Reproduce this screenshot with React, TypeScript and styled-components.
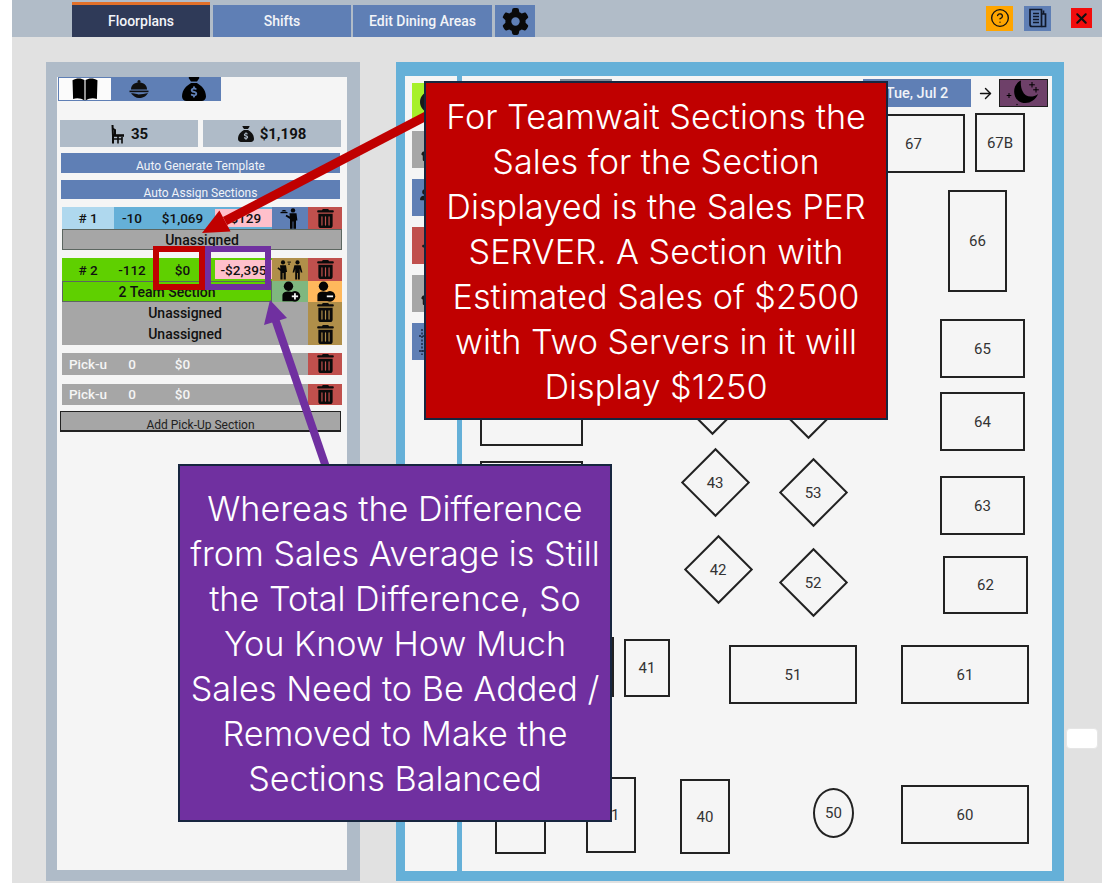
import React from "react";
import styled, { createGlobalStyle } from "styled-components";
import { FaChair, FaGear, FaSackDollar, FaTrashCan, FaXmark, FaClock, FaUsers, FaPlus } from "react-icons/fa6";
import { CircleHelp, ArrowRight } from "lucide-react";

const UI_FONT = `Roboto, "Open Sans", sans-serif`;

const GlobalStyle = createGlobalStyle`
  html, body {
    margin: 0;
    padding: 0;
    background: #ffffff;
    font-family: ${UI_FONT};
  }
  * { box-sizing: border-box; }
`;

const Page = styled.div`
  position: relative;
  width: 1114px;
  height: 883px;
  padding: 0 12px;
  overflow: hidden;
`;

const AppWindow = styled.div`
  width: 1090px;
  height: 883px;
  background: #e1e1e1;
`;

const TopBar = styled.header`
  height: 37px;
  display: flex;
  align-items: flex-end;
  padding-left: 60px;
  background: #b1bcc8;
`;

const Tab = styled.div<{ $active?: boolean; $w?: number; $gap?: number }>`
  width: ${({ $w }) => $w ?? 138}px;
  height: ${({ $active }) => ($active ? 35 : 32)}px;
  margin-right: ${({ $gap }) => $gap ?? 2}px;
  display: flex;
  align-items: center;
  justify-content: center;
  background: ${({ $active }) => ($active ? "#2f3a58" : "#5f7fb5")};
  border-top: ${({ $active }) => ($active ? "3px solid #e2702a" : "none")};
  color: #f2f4f8;
  font-size: 14px;
  font-weight: 500;
`;

const TopActions = styled.div`
  margin-left: auto;
  height: 37px;
  display: flex;
  align-items: center;
  padding-right: 10px;
`;

const TopAction = styled.div<{ $bg: string; $size: number; $gap: number }>`
  width: ${({ $size }) => $size}px;
  height: ${({ $size }) => ($size > 24 ? 25 : 20)}px;
  margin-left: ${({ $gap }) => $gap}px;
  margin-bottom: 1px;
  display: flex;
  align-items: center;
  justify-content: center;
  background: ${({ $bg }) => $bg};
  color: #111;
`;

const Main = styled.main`
  display: flex;
  padding: 25px 0 0 34px;
  gap: 36px;
`;

const LeftPanel = styled.section`
  width: 314px;
  height: 819px;
  border: solid #afbbc8;
  border-width: 15px 13px 11px 11px;
  background: #f5f5f5;
`;

const MiniTabs = styled.div`
  width: 163px;
  height: 24px;
  margin-left: 1px;
  display: flex;
  background: #5f7fb5;
`;

const MiniTab = styled.div<{ $active?: boolean }>`
  width: ${({ $active }) => ($active ? 54 : 55)}px;
  display: flex;
  align-items: center;
  justify-content: center;
  background: ${({ $active }) => ($active ? "#fbfbfb" : "transparent")};
  border: ${({ $active }) => ($active ? "1px solid #5f7fb5" : "none")};
  color: #000;
`;

const Stats = styled.div`
  display: flex;
  gap: 5px;
  margin: 19px 0 0 3px;
`;

const Stat = styled.div`
  width: 138px;
  height: 27px;
  display: flex;
  align-items: center;
  justify-content: center;
  gap: 6px;
  background: #afbbc8;
  color: #111;
  font-size: 15px;
  font-weight: 700;
`;

const WideButton = styled.div<{ $top: number }>`
  width: 279px;
  height: 19.5px;
  margin: ${({ $top }) => $top}px 0 0 4px;
  overflow: hidden;
  background: #5f7fb5;
  color: #f0f3f8;
  font-size: 12px;
  line-height: 26px;
  text-align: center;
`;

const RowGroup = styled.div<{ $top: number }>`
  width: 280px;
  margin: ${({ $top }) => $top}px 0 0 5px;
`;

const SectionRow = styled.div<{ $h?: number }>`
  display: grid;
  grid-template-columns: 52px 36px 65px 57px 36px 34px;
  height: ${({ $h }) => $h ?? 22}px;
  font-size: 13.5px;
  font-weight: 500;
`;

const Cell = styled.div<{ $bg?: string; $span?: number; $color?: string; $name?: boolean }>`
  grid-column: span ${({ $span }) => $span ?? 1};
  display: flex;
  align-items: center;
  justify-content: center;
  white-space: nowrap;
  overflow: hidden;
  background: ${({ $bg }) => $bg ?? "transparent"};
  color: ${({ $color }) => $color ?? "#111"};
  font-size: ${({ $name }) => ($name ? "14px" : "inherit")};
`;

const PinkValue = styled.div<{ $edge: string }>`
  grid-column: span 1;
  display: flex;
  align-items: center;
  justify-content: center;
  background: #ffc0cb;
  border: solid ${({ $edge }) => $edge};
  border-width: 2px 0 2px 0;
  color: #111;
  font-size: 13.5px;
  font-weight: 500;
  overflow: hidden;
`;

const NameBar = styled.div<{ $bg: string; $h: number }>`
  height: ${({ $h }) => $h}px;
  display: flex;
  align-items: center;
  justify-content: center;
  background: ${({ $bg }) => $bg};
  border: 1px solid #5c6660;
  color: #111;
  font-size: 14px;
  font-weight: 500;
`;

const TeamName = styled(NameBar)`
  grid-column: span 4;
`;

const AddPickup = styled.div`
  width: 281px;
  height: 21px;
  margin: 6px 0 0 3px;
  overflow: hidden;
  background: #a6a6a6;
  border: 1px solid #222;
  border-bottom-width: 2px;
  color: #222;
  font-size: 12px;
  line-height: 26px;
  text-align: center;
`;

const RightPanel = styled.section`
  width: 668px;
  height: 819px;
  display: flex;
  border: solid #65b0d8;
  border-width: 14px 12px 10px 9px;
  background: #f5f5f5;
`;

const Rail = styled.div`
  width: 52px;
  padding: 7px 0 0 7px;
  display: flex;
  flex-direction: column;
  gap: 11px;
`;

const RailButton = styled.div<{ $bg: string }>`
  width: 38px;
  height: 37px;
  display: flex;
  align-items: center;
  justify-content: center;
  background: ${({ $bg }) => $bg};
  color: #1a1a1a;
  font-size: 22px;
`;

const RailDivider = styled.div`
  width: 5px;
  background: #65b0d8;
`;

const Floor = styled.div`
  position: relative;
  flex: 1;
`;

const FloorHeader = styled.div`
  display: flex;
  align-items: center;
  height: 28px;
  margin-top: 3px;
  padding: 0 4px 0 98px;
`;

const ModeTab = styled.div`
  width: 52px;
  height: 28px;
  background: #7f8a96;
`;

const DateButton = styled.div`
  width: 108px;
  height: 28px;
  margin-left: auto;
  display: flex;
  align-items: center;
  justify-content: center;
  background: #5f7fb5;
  color: #f0f3f8;
  font-size: 14.5px;
  font-weight: 500;
`;

const NextArrow = styled.div`
  width: 28px;
  display: flex;
  justify-content: center;
  color: #111;
`;

const MoonBox = styled.div`
  width: 49px;
  height: 28px;
  display: flex;
  align-items: center;
  justify-content: center;
  background: #6e4069;
  border: 1px solid #1d1d1d;
`;

// tables are items on a free canvas, x/y come from the floorplan data
const Table = styled.div<{ $x: number; $y: number; $w: number; $h: number; $round?: boolean }>`
  position: absolute;
  left: ${({ $x }) => $x}px;
  top: ${({ $y }) => $y}px;
  width: ${({ $w }) => $w}px;
  height: ${({ $h }) => $h}px;
  display: flex;
  align-items: center;
  justify-content: center;
  border: 2px solid #222;
  border-radius: ${({ $round }) => ($round ? "50%" : "0")};
  color: #333;
  font-size: 15px;
`;

const DiamondTable = styled(Table)`
  transform: rotate(45deg);
`;

const DiamondLabel = styled.span`
  transform: rotate(-45deg);
`;

const Handle = styled.div`
  position: absolute;
  left: 1066px;
  top: 728px;
  width: 32px;
  height: 21px;
  background: #ffffff;
  border: 1px solid #e6e6e6;
  border-radius: 4px;
`;

const Markup = styled.svg`
  position: absolute;
  left: 0;
  top: 0;
  width: 1114px;
  height: 883px;
  pointer-events: none;
`;

const Callout = styled.div<{ $x: number; $y: number; $w: number; $h: number; $bg: string }>`
  position: absolute;
  left: ${({ $x }) => $x}px;
  top: ${({ $y }) => $y}px;
  width: ${({ $w }) => $w}px;
  height: ${({ $h }) => $h}px;
  padding-top: 1px;
  display: flex;
  flex-direction: column;
  align-items: center;
  justify-content: center;
  background: ${({ $bg }) => $bg};
  border: 2px solid #17263f;
  color: #ffffff;
  font-family: Inter, "Noto Sans", sans-serif;
  font-size: 34.2px;
  font-weight: 300;
  line-height: 45px;
`;

const CalloutLine = styled.div`
  white-space: nowrap;
`;

const Trash = ({ size = 19 }: { size?: number }) => <FaTrashCan size={size} color="#0b0b0b" />;

const BookIcon = () => (
  <svg width="28" height="24" viewBox="0 0 28 25" fill="#000">
    <path d="M1 3.5C5 .8 10 .8 13.4 3.2V24.5C10 22 5 21.6 1.6 23Z" />
    <path d="M27 3.5C23 .8 18 .8 14.6 3.2V24.5C18 22 23 21.6 26.4 23Z" />
  </svg>
);

const ServiceIcon = () => (
  <svg width="22" height="22" viewBox="0 0 22 22" fill="#101010">
    <circle cx="11" cy="3.4" r="1.5" />
    <path d="M3 11.5C3 7.2 6.5 4.6 11 4.6S19 7.2 19 11.5Z" />
    <rect x="1.5" y="12.6" width="19" height="1.6" />
    <path d="M3 15.4C6 14.8 8 16 10.5 16.4L15 16C17 15.8 18.5 15.2 20 15C18.5 18 15 20 11 20C8 20 5.5 18 3 15.4Z" />
  </svg>
);

const ChairIcon = () => (
  <svg width="15" height="20" viewBox="0 0 15 20" fill="none" stroke="#0a0a0a" strokeWidth="2">
    <path d="M2.5 1L3 12V19.5" />
    <path d="M2.5 4.5L5 6V11" />
    <path d="M2 11.5H14" strokeWidth="2.6" />
    <path d="M8 12V16M4 15H12M12 13V19.5M8 16V19.5" strokeWidth="1.6" />
  </svg>
);

const WaiterIcon = () => (
  <svg width="22" height="21" viewBox="0 0 22 21" fill="#050505">
    <circle cx="14" cy="2.4" r="2.2" />
    <path d="M10.5 5.2H17.5L18.4 12.5H17V20.8H14.4V13.6H13.6V20.8H11V11L6.6 8.2L7.4 6.8L10.8 8.4Z" />
    <rect x="1.5" y="4" width="7" height="1.2" />
    <path d="M2.6 3.6C2.6 1.6 7.4 1.6 7.4 3.6Z" />
  </svg>
);

const TeamIcon = () => (
  <svg width="30" height="20" viewBox="0 0 30 20" fill="#080808">
    <circle cx="8" cy="2.4" r="2.1" />
    <path d="M5 5.2H11L12 12H10.8V19.6H8.6V13H7.6V19.6H5.4V11L2.4 8.4L3.4 7.2L5.4 8.8Z" />
    <circle cx="22.5" cy="2.4" r="2.1" />
    <path d="M19.4 5.2H25.6L27.4 12.4H25.8L24.8 9V19.6H22.9V13H22.1V19.6H20.2V9L19.2 12.4H17.6Z" />
    <rect x="12.5" y="1.6" width="3.4" height="1" />
    <rect x="13" y="3.6" width="2" height="1" />
  </svg>
);

const PersonBadge = ({ minus }: { minus?: boolean }) => (
  <svg width="21" height="21" viewBox="0 0 26 26">
    <circle cx="10.5" cy="6.5" r="5.8" fill="#050505" />
    <path d="M3 25V18C3 14.5 6 13 10.5 13C14 13 16 14 17 15.5V25Z" fill="#050505" />
    <circle cx="18.5" cy="19" r="6.6" fill="#050505" />
    <rect x="14.6" y="17.9" width="7.8" height="2.2" fill="#f5f5f5" />
    {!minus && <rect x="17.4" y="15.1" width="2.2" height="7.8" fill="#f5f5f5" />}
  </svg>
);

const NoteIcon = () => (
  <svg width="22" height="22" viewBox="0 0 22 22" fill="none" stroke="#10182a" strokeWidth="1.7">
    <path d="M3 2.5H14.5V19.5H5C3.8 19.5 3 18.7 3 17.5Z" />
    <path d="M6 6.5H12M6 9.5H12M6 12.5H12M6 15.5H12" />
    <path d="M14.5 7H18.5V19.5H14.5" />
    <path d="M16.5 7V3.5" />
  </svg>
);

const MoonIcon = () => (
  <svg width="47" height="26" viewBox="0 0 47 26" fill="#000">
    <path d="M21 .5C13 4 12 15 18 20.5C25 26 35 22 38 14C32 18.5 25 17 22.5 11C21 7.5 20.5 4 21 .5Z" />
    <path d="M32 2V7.5M29.2 4.8H34.8M36 7V12.5M33.2 9.8H38.8M9 13V18M6.7 15.5H11.3" stroke="#000" strokeWidth="1" />
    <circle cx="17" cy="24.5" r=".7" />
  </svg>
);

const GridIcon = () => (
  <svg width="26" height="30" viewBox="0 0 26 30" fill="none" stroke="#18243c" strokeWidth="1.4" strokeDasharray="2 1.5">
    <path d="M4 2V28M22 2V28M1 9H25M1 24H25" />
  </svg>
);

const PLAIN_TABLES = [
  { id: "67", x: 400, y: 38, w: 103, h: 59 },
  { id: "67B", x: 513, y: 37, w: 50, h: 59 },
  { id: "66", x: 486, y: 114, w: 59, h: 102 },
  { id: "65", x: 478, y: 243, w: 85, h: 59 },
  { id: "64", x: 478, y: 316, w: 85, h: 59 },
  { id: "63", x: 478, y: 400, w: 85, h: 59 },
  { id: "62", x: 481, y: 480, w: 85, h: 58 },
  { id: "61", x: 439, y: 569, w: 128, h: 59 },
  { id: "60", x: 439, y: 709, w: 128, h: 59 },
  { id: "51", x: 267, y: 569, w: 128, h: 59 },
  { id: "41", x: 162, y: 563, w: 46, h: 58 },
  { id: "40", x: 218, y: 703, w: 50, h: 75 },
  { id: "31", x: 124, y: 701, w: 50, h: 76 },
  { id: "30", x: 33, y: 703, w: 51, h: 75 },
  { id: "", x: 103, y: 561, w: 49, h: 60 },
  { id: "", x: 18, y: 270, w: 103, h: 100 },
  { id: "", x: 18, y: 385, w: 103, h: 60 },
];

const DIAMOND_TABLES = [
  { id: "44", x: 226, y: 300 },
  { id: "54", x: 322, y: 304 },
  { id: "43", x: 229, y: 382 },
  { id: "53", x: 327, y: 392 },
  { id: "42", x: 232, y: 469 },
  { id: "52", x: 327, y: 482 },
];

const RED_TEXT = [
  "For Teamwait Sections the",
  "Sales for the Section",
  "Displayed is the Sales PER",
  "SERVER. A Section with",
  "Estimated Sales of $2500",
  "with Two Servers in it will",
  "Display $1250",
];

const PURPLE_TEXT = [
  "Whereas the Difference",
  "from Sales Average is Still",
  "the Total Difference, So",
  "You Know How Much",
  "Sales Need to Be Added /",
  "Removed to Make the",
  "Sections Balanced",
];

const PickupRow = () => (
  <SectionRow $h={21.5}>
    <Cell $bg="#a6a6a6" $color="#f5f5f5">Pick-u</Cell>
    <Cell $bg="#a6a6a6" $color="#f5f5f5">0</Cell>
    <Cell $bg="#a6a6a6" $color="#f5f5f5">$0</Cell>
    <Cell $bg="#a6a6a6" $span={2} />
    <Cell $bg="#c0504d"><Trash /></Cell>
  </SectionRow>
);

export default function App() {
  return (
    <Page>
      <GlobalStyle />
      <AppWindow>
        <TopBar>
          <Tab $active $gap={3}>Floorplans</Tab>
          <Tab>Shifts</Tab>
          <Tab $w={139} $gap={3}>Edit Dining Areas</Tab>
          <Tab $w={40}><FaGear size={27} color="#0a0a0a" /></Tab>
          <TopActions>
            <TopAction $bg="#ffa500" $size={27} $gap={0}><CircleHelp size={20} strokeWidth={1.6} /></TopAction>
            <TopAction $bg="#5f7fb5" $size={27} $gap={11}><NoteIcon /></TopAction>
            <TopAction $bg="#f20d0d" $size={21} $gap={20}><FaXmark size={17} /></TopAction>
          </TopActions>
        </TopBar>

        <Main>
          <LeftPanel>
            <MiniTabs>
              <MiniTab $active><BookIcon /></MiniTab>
              <MiniTab><ServiceIcon /></MiniTab>
              <MiniTab><FaSackDollar size={24} /></MiniTab>
            </MiniTabs>

            <Stats>
              <Stat><ChairIcon /> 35</Stat>
              <Stat><FaSackDollar size={16} /> $1,198</Stat>
            </Stats>

            <WideButton $top={6}>Auto Generate Template</WideButton>
            <WideButton $top={7}>Auto Assign Sections</WideButton>

            <RowGroup $top={8}>
              <SectionRow>
                <Cell $bg="#afd8ee"># 1</Cell>
                <Cell $bg="#65b0d8">-10</Cell>
                <Cell $bg="#65b0d8">$1,069</Cell>
                <PinkValue $edge="#65b0d8">-$129</PinkValue>
                <Cell $bg="#5f7fb5"><WaiterIcon /></Cell>
                <Cell $bg="#c0504d"><Trash /></Cell>
              </SectionRow>
              <NameBar $bg="#a6a6a6" $h={21}>Unassigned</NameBar>
            </RowGroup>

            <RowGroup $top={8}>
              <SectionRow $h={23}>
                <Cell $bg="#5fd000"># 2</Cell>
                <Cell $bg="#5fd000">-112</Cell>
                <Cell $bg="#5fd000">$0</Cell>
                <PinkValue $edge="#5fd000">-$2,395</PinkValue>
                <Cell $bg="#b08f4a"><TeamIcon /></Cell>
                <Cell $bg="#c0504d"><Trash /></Cell>
              </SectionRow>
              <SectionRow $h={21}>
                <TeamName $bg="#5fd000" $h={21}>2 Team Section</TeamName>
                <Cell $bg="#7fb77f"><PersonBadge /></Cell>
                <Cell $bg="#ffb85c"><PersonBadge minus /></Cell>
              </SectionRow>
              <SectionRow $h={21.5}>
                <Cell $bg="#a6a6a6" $span={5} $name>Unassigned</Cell>
                <Cell $bg="#b08f4a"><Trash /></Cell>
              </SectionRow>
              <SectionRow $h={21.5}>
                <Cell $bg="#a6a6a6" $span={5} $name>Unassigned</Cell>
                <Cell $bg="#b08f4a"><Trash /></Cell>
              </SectionRow>
            </RowGroup>

            <RowGroup $top={8}><PickupRow /></RowGroup>
            <RowGroup $top={9}><PickupRow /></RowGroup>

            <AddPickup>Add Pick-Up Section</AddPickup>
          </LeftPanel>

          <RightPanel>
            <Rail>
              <RailButton $bg="#a6f02a"><FaClock /></RailButton>
              <RailButton $bg="#a6a6a6"><FaChair /></RailButton>
              <RailButton $bg="#5f7fb5"><FaUsers /></RailButton>
              <RailButton $bg="#c0504d"><FaPlus /></RailButton>
              <RailButton $bg="#a6a6a6"><FaChair /></RailButton>
              <RailButton $bg="#5f7fb5"><GridIcon /></RailButton>
            </Rail>
            <RailDivider />
            <Floor>
              <FloorHeader>
                <ModeTab />
                <DateButton>Tue, Jul 2</DateButton>
                <NextArrow><ArrowRight size={17} strokeWidth={2} /></NextArrow>
                <MoonBox><MoonIcon /></MoonBox>
              </FloorHeader>
              {PLAIN_TABLES.map((t, i) => (
                <Table key={i} $x={t.x} $y={t.y} $w={t.w} $h={t.h}>{t.id}</Table>
              ))}
              {DIAMOND_TABLES.map((t) => (
                <DiamondTable key={t.id} $x={t.x} $y={t.y} $w={49} $h={49}>
                  <DiamondLabel>{t.id}</DiamondLabel>
                </DiamondTable>
              ))}
              <Table $x={351} $y={712} $w={41} $h={50} $round>50</Table>
            </Floor>
          </RightPanel>
        </Main>
      </AppWindow>

      <Handle />

      <Markup viewBox="0 0 1114 883">
        <rect x="156" y="249" width="46" height="38" fill="none" stroke="#c00000" strokeWidth="6" />
        <rect x="208" y="249" width="60" height="38" fill="none" stroke="#7030a0" strokeWidth="6" />
        <line x1="430" y1="114" x2="225" y2="221" stroke="#c00000" strokeWidth="9" />
        <polygon points="202,233 219.4,210.4 230.6,231.6" fill="#c00000" />
        <line x1="327" y1="470" x2="275.5" y2="320" stroke="#7030a0" strokeWidth="8" />
        <polygon points="270,300 264,325 287,318" fill="#7030a0" />
      </Markup>

      <Callout $x={424} $y={81} $w={464} $h={339} $bg="#c00000">
        {RED_TEXT.map((l) => <CalloutLine key={l}>{l}</CalloutLine>)}
      </Callout>
      <Callout $x={178} $y={464} $w={434} $h={358} $bg="#7030a0">
        {PURPLE_TEXT.map((l) => <CalloutLine key={l}>{l}</CalloutLine>)}
      </Callout>
    </Page>
  );
}
